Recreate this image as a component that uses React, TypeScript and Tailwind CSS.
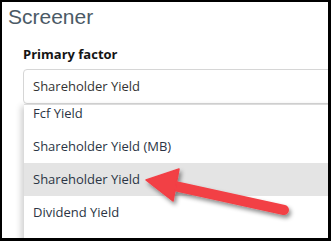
const items = ["Fcf Yield", "Shareholder Yield (MB)", "Shareholder Yield", "Dividend Yield"]

const Arrow = () => (
  <svg
    className="absolute left-[-2px] top-[-2px]"
    width="331"
    height="241"
    viewBox="0 0 331 241"
  >
    <defs>
      <filter id="sh" x="-20%" y="-50%" width="140%" height="200%">
        <feDropShadow dx="2" dy="3" stdDeviation="2" floodColor="#000" floodOpacity="0.45" />
      </filter>
    </defs>
    <g filter="url(#sh)" fill="#f23f45" stroke="#f23f45">
      <line x1="170" y1="185" x2="284" y2="210" strokeWidth="10" strokeLinecap="round" />
      <polygon points="146,180 179,169 173,201" strokeWidth="1.5" strokeLinejoin="round" />
    </g>
  </svg>
)

export default function App() {
  return (
    <div className="relative w-[331px] h-[241px] overflow-hidden bg-white border-t-2 border-l-2 border-r-[3px] border-b-[3px] border-black">
      <div className="pl-[6px] pt-[4px] text-[21px] leading-[21px] text-[#4b5a66] font-['Liberation_Sans',Arial,sans-serif]">
        Screener
      </div>
      <div className="pl-[21px] font-['Open_Sans',sans-serif]">
        <div className="mt-[18px] text-[13px] leading-[18px] font-bold text-[#151515]">
          Primary factor
        </div>
        <div className="mt-[6px] w-[330px] h-[35px] border border-[#d6d6d6] rounded-[4px] pl-[9px] text-[13px] leading-[33px] text-[#333]">
          Shareholder Yield
        </div>
        <div className="ml-px w-[330px] h-[140px] overflow-hidden bg-white border-t border-[#dcdcdc] shadow-[-3px_2px_6px_rgba(0,0,0,0.18)]">
          <div className="-mt-[8px]">
            {items.map((t, i) => (
              <div
                key={t}
                className={`h-[33px] pl-[9px] text-[13px] leading-[33px] text-[#2b3544] ${i === 2 ? "bg-[#e4e4e4]" : ""}`}
              >
                {t}
              </div>
            ))}
          </div>
        </div>
      </div>
      <Arrow />
    </div>
  )
}
